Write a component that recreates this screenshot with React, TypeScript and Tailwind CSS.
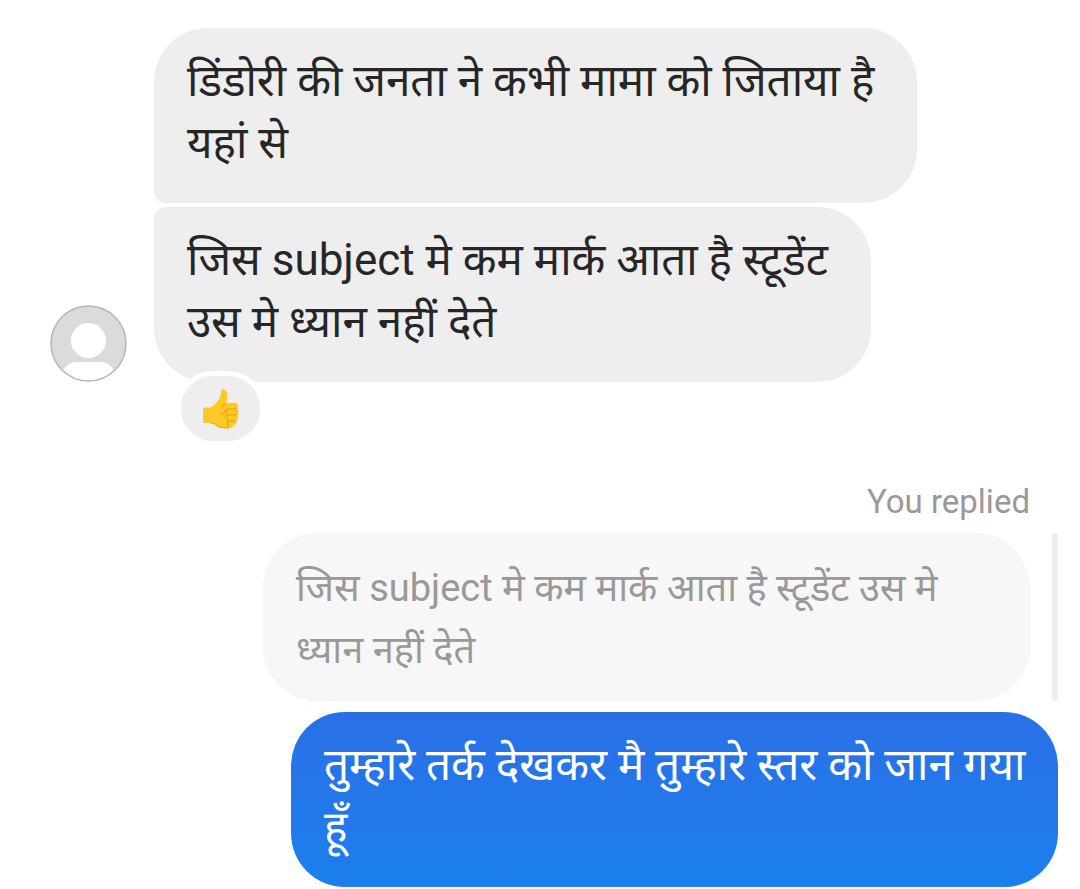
import React from 'react';

const Avatar: React.FC = () => (
  <svg viewBox="0 0 78 78" className="h-[78px] w-[78px] shrink-0" role="img" aria-label="Profile picture">
    <defs>
      <clipPath id="avatar-clip">
        <circle cx="38.5" cy="39.5" r="37" />
      </clipPath>
    </defs>
    <circle cx="38.5" cy="39.5" r="37.5" fill="#dbdbdb" />
    <g clipPath="url(#avatar-clip)" fill="#fff">
      <circle cx="38.5" cy="36.5" r="17.5" />
      <path d="M11 69c5-7 8-11 16-11h23c8 0 11 4 16 11v12H11z" />
    </g>
    <circle cx="38.5" cy="39.5" r="37.5" fill="none" stroke="#b5b5b5" strokeWidth="1.5" />
  </svg>
);

const ThumbsUp: React.FC = () => (
  <svg viewBox="0 0 36 40" className="h-10 w-9" role="img" aria-label="Thumbs up">
    <path
      d="M1.500 18.500H7c4-2 8-6 10-10 1-2 .7-5 1.200-6.700C18.800-.3 22.500-.3 23.700 2.500c1.300 3.500.6 8.500-.5 12 2.500-.5 6-1 9-.7 3.500.5 3.700 4.200 1.300 5.700 3 1.200 3 5 .7 6 1.800 2 1.300 5-.9 6 .8 2.700-.3 4.700-2.800 5-.3 1.700-2 2.500-4.500 2.500-4 0-8 .2-11-1.200-2.500-1.300-4-3.800-7-3.800H1.500C.5 34 0 33.500 0 32.500V20c0-1 .5-1.500 1.500-1.500z"
      fill="#fdc926"
    />
    <path
      d="M23.200 14.500c-2 .8-3 2-4.500 4.500M33.500 19.500c-3 .6-6 .4-9 .8M33.900 25.500c-3 .6-6 .6-9 .6M33 31.500c-3 .6-5 .5-8 .2M18.500 25.500c3-1 4-4 4.500-5 0 3 .5 5 2 6-1.500 1-1.500 4 0 5-1 2-.5 4 .5 6"
      fill="none"
      stroke="#f0a30a"
      strokeWidth="1.200"
      strokeLinecap="round"
      strokeLinejoin="round"
    />
    <path d="M8 34c3 0 4.500 2 7 3.500 3 1.500 7 1.500 11 1.500" fill="none" stroke="#f0a30a" strokeWidth="1" />
  </svg>
);

export default function App() {
  return (
    <main className="min-h-screen overflow-hidden bg-white pt-7 font-['Roboto','Noto_Sans_Devanagari','Noto_Sans',sans-serif] text-[#262626]">
      <section className="flex items-end gap-[26px] pl-[50px]">
        <Avatar />
        <div className="flex flex-col items-start gap-1 text-[44px] leading-[62px]">
          <p className="rounded-[54px] rounded-bl-[12px] bg-[#eeeeee] pt-[22px] pr-[43px] pb-[29px] pl-[33px]">
            डिंडोरी की जनता ने कभी मामा को जिताया है
            <br />
            यहां से
          </p>
          <p className="rounded-[54px] rounded-tl-[12px] bg-[#eeeeee] pt-[22px] pr-[43px] pb-[29px] pl-[33px]">
            जिस subject मे कम मार्क आता है स्टूडेंट
            <br />
            उस मे ध्यान नहीं देते
          </p>
        </div>
      </section>

      <div className="relative -mt-[11px] ml-[176px] flex h-[75px] w-[89px] items-center justify-center rounded-[37px] border-[5px] border-white bg-[#eeeeee]">
        <ThumbsUp />
      </div>

      <section className="mt-[36px] flex flex-col items-end pr-[22px]">
        <p className="mr-7 text-[33px] leading-[40px] text-[#999999]">You replied</p>
        <div className="mt-[11px] flex gap-[22px]">
          <blockquote className="max-w-[767px] rounded-[54px] bg-[#f7f7f7] px-[33px] pt-6 pb-5 text-[38px] leading-[62px] text-[#999999]">
            जिस subject मे कम मार्क आता है स्टूडेंट उस मे ध्यान नहीं देते
          </blockquote>
          <div className="w-[6px] rounded-full bg-[#eeeeee]" />
        </div>
        <p className="mt-[11px] max-w-[767px] rounded-[54px] bg-linear-to-b from-[#2970e6] to-[#1b7fee] pt-[22px] pr-6 pb-[29px] pl-[33px] text-[44px] leading-[62px] text-white">
          तुम्हारे तर्क देखकर मै तुम्हारे स्तर को जान गया हूँ
        </p>
      </section>
    </main>
  );
}
